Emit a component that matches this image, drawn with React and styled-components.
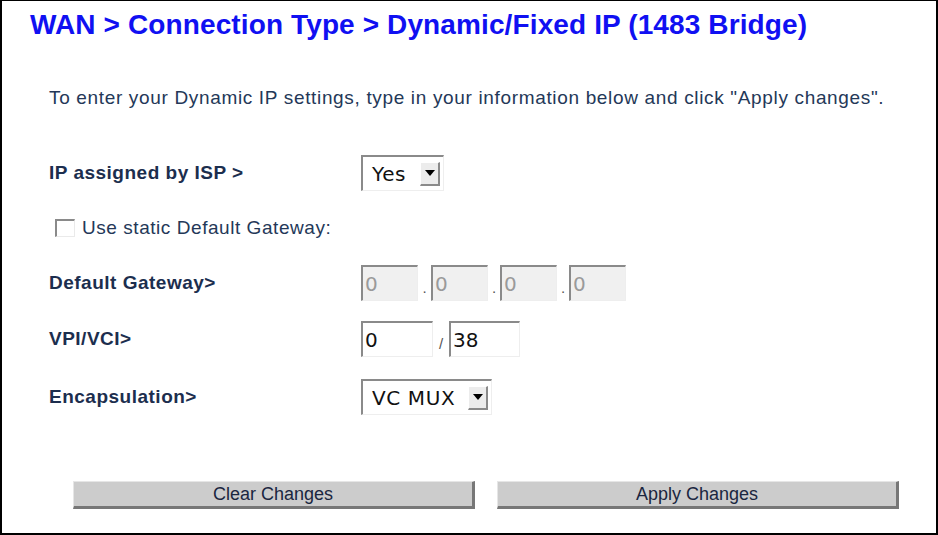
import React from "react";
import styled, { createGlobalStyle } from "styled-components";

const GlobalStyle = createGlobalStyle`
  html, body {
    margin: 0;
    padding: 0;
    background: #fff;
  }
  * {
    box-sizing: border-box;
  }
`;

const Frame = styled.div`
  width: 938px;
  height: 535px;
  border: 2px solid #000;
  border-top-width: 1px;
  background: #fff;
  font-family: "Liberation Sans", Arial, sans-serif;
  color: #1f3150;
  padding: 8px 0 0 0;
`;

const Title = styled.h1`
  margin: 0 0 0 28px;
  font-size: 28px;
  letter-spacing: 0.12px;
  line-height: 32px;
  font-weight: 700;
  color: #1010f2;
  white-space: nowrap;
`;

const Intro = styled.p`
  margin: 45px 0 0 47px;
  font-size: 19px;
  letter-spacing: 0.66px;
  line-height: 24px;
  color: #243858;
  white-space: nowrap;
`;

const Form = styled.div`
  display: flex;
  flex-direction: column;
  gap: 20px;
  margin: 45px 0 0 47px;
`;

const Row = styled.div`
  display: grid;
  grid-template-columns: ${(p) => (p.single ? "1fr" : "312px 1fr")};
  align-items: center;
  height: ${(p) => p.h || 36}px;
  margin-top: ${(p) => p.mt || 0}px;
`;

const Label = styled.div`
  font-size: 19px;
  letter-spacing: 0.5px;
  font-weight: 700;
  color: #1c2e4e;
  white-space: nowrap;
`;

const Controls = styled.div`
  display: flex;
  align-items: center;
`;

const SelectBox = styled.div`
  display: flex;
  align-items: center;
  justify-content: space-between;
  width: ${(p) => p.w}px;
  height: 36px;
  border-top: 2px solid #8a8a8a;
  border-left: 2px solid #8a8a8a;
  border-right: 1px solid #eeeeee;
  border-bottom: 1px solid #eeeeee;
  background: #fff;
  padding: 0 3px 0 9px;
  font-family: "DejaVu Sans", sans-serif;
  font-size: 20px;
  letter-spacing: 0.6px;
  color: #111;
`;

const Arrow = styled.div`
  width: 20px;
  height: 24px;
  background: #ececec;
  border-right: 2px solid #8a8a8a;
  border-bottom: 2px solid #8a8a8a;
  border-top: 1px solid #fff;
  border-left: 1px solid #fff;
  display: flex;
  align-items: center;
  justify-content: center;
  &::after {
    content: "";
    border-left: 5px solid transparent;
    border-right: 5px solid transparent;
    border-top: 6px solid #000;
  }
`;

const TextBox = styled.div`
  display: flex;
  align-items: center;
  width: ${(p) => p.w}px;
  height: 36px;
  border-top: 2px solid #8a8a8a;
  border-left: 2px solid #8a8a8a;
  border-right: 1px solid #eeeeee;
  border-bottom: 1px solid #eeeeee;
  background: ${(p) => (p.disabled ? "#f0f0f0" : "#fff")};
  color: ${(p) => (p.disabled ? "#9a9a9a" : "#111")};
  padding-left: 2px;
  font-family: "DejaVu Sans", sans-serif;
  font-size: 20px;
`;

const Sep = styled.span`
  width: ${(p) => p.w}px;
  text-align: center;
  font-size: 15px;
  color: #555;
  padding-top: 8px;
`;

const CheckRow = styled.div`
  display: flex;
  align-items: center;
  gap: 7px;
  padding-left: 6px;
  font-size: 19px;
  letter-spacing: 0.55px;
  color: #243858;
`;

const Check = styled.div`
  width: 20px;
  height: 18px;
  border-top: 2px solid #8a8a8a;
  border-left: 2px solid #8a8a8a;
  border-right: 1px solid #eaeaea;
  border-bottom: 1px solid #eaeaea;
  background: #fff;
`;

const Buttons = styled.div`
  display: flex;
  gap: 22px;
  margin: 66px 0 0 71px;
`;

const Button = styled.button`
  width: 402px;
  height: 28px;
  background: #cccccc;
  border-top: 1px solid #e6e6e6;
  border-left: 1px solid #e6e6e6;
  border-right: 3px solid #777;
  border-bottom: 3px solid #777;
  font-family: "Liberation Sans", Arial, sans-serif;
  font-size: 18px;
  color: #1a2640;
  padding: 0;
  line-height: 22px;
`;

export default function App() {
  return (
    <>
      <GlobalStyle />
      <Frame>
        <Title>WAN &gt; Connection Type &gt; Dynamic/Fixed IP (1483 Bridge)</Title>
        <Intro>
          To enter your Dynamic IP settings, type in your information below and click "Apply changes".
        </Intro>
        <Form>
          <Row>
            <Label>IP assigned by ISP &gt;</Label>
            <Controls>
              <SelectBox w={83}>
                Yes
                <Arrow />
              </SelectBox>
            </Controls>
          </Row>
          <Row h={34} single>
            <CheckRow>
              <Check />
              Use static Default Gateway:
            </CheckRow>
          </Row>
          <Row>
            <Label>Default Gateway&gt;</Label>
            <Controls>
              <TextBox w={57} disabled>0</TextBox>
              <Sep w={13}>.</Sep>
              <TextBox w={57} disabled>0</TextBox>
              <Sep w={12}>.</Sep>
              <TextBox w={57} disabled>0</TextBox>
              <Sep w={12}>.</Sep>
              <TextBox w={57} disabled>0</TextBox>
            </Controls>
          </Row>
          <Row>
            <Label>VPI/VCI&gt;</Label>
            <Controls>
              <TextBox w={72}>0</TextBox>
              <Sep w={16}>/</Sep>
              <TextBox w={71}>38</TextBox>
            </Controls>
          </Row>
          <Row mt={2}>
            <Label>Encapsulation&gt;</Label>
            <Controls>
              <SelectBox w={131}>
                VC MUX
                <Arrow />
              </SelectBox>
            </Controls>
          </Row>
        </Form>
        <Buttons>
          <Button>Clear Changes</Button>
          <Button>Apply Changes</Button>
        </Buttons>
      </Frame>
    </>
  );
}
